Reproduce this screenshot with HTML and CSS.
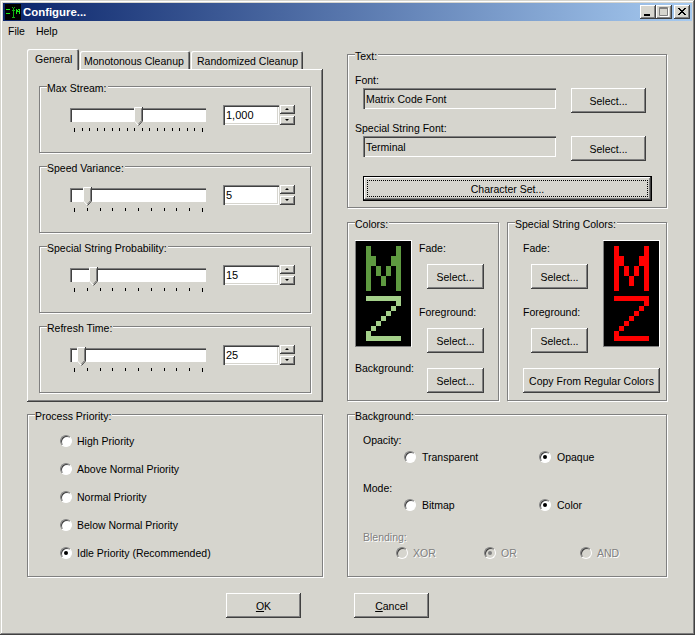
FILE: index.html
```html
<!DOCTYPE html>
<html lang="en">
<head>
  <meta charset="UTF-8" />
  <title>Configure...</title>
  <link rel="stylesheet" href="styles.css">
</head>
<body>
  <svg class="defs" width="0" height="0">
    <symbol id="thumb" viewBox="0 0 10 19">
      <path d="M0 0H9V14L5 19H4L0 14Z" fill="#d6d5ce"/>
      <path d="M0.5 14V0.5H8" fill="none" stroke="#fff"/>
      <path d="M0.5 14L4.5 18.5" fill="none" stroke="#fff"/>
      <path d="M8.5 0V14L4.5 18.5" fill="none" stroke="#404040"/>
      <path d="M7.5 1.5V13.6L4.5 17" fill="none" stroke="#808080"/>
    </symbol>
    <symbol id="letter-m" viewBox="0 0 35 45">
      <path d="M0 0H5V10H10V20H15V30H20V20H25V10H30V0H35V45H30V20H25V30H20V40H15V30H10V20H5V45H0Z" fill="currentColor"/>
    </symbol>
    <symbol id="letter-z" viewBox="0 0 35 45">
      <path d="M0 0H35V10H30V15H25V20H20V25H15V30H10V35H5V40H35V45H0V35H5V30H10V25H15V20H20V15H25V10H30V5H0Z" fill="currentColor"/>
    </symbol>
  </svg>

  <div class="window">
    <div class="titlebar">
      <svg class="app-icon" width="16" height="16" viewBox="0 0 16 16">
        <rect width="16" height="16" fill="#000"/>
        <path d="M1 5H5V6H4V7H3V8H2V9H5V10H1V9H2V8H3V7H4V6H1Z" fill="#19e619"/>
        <path d="M7 3H8V4H7ZM9 3H10V4H9ZM8 4H9V13H8ZM7 6H10V7H7ZM7 13H10V14H7Z" fill="#12b012"/>
        <path d="M11 5H12V6H13V7H14V6H13V5H15V10H14V8H12V10H11Z" fill="#19e619"/>
      </svg>
      <span class="title-text">Configure...</span>
      <div class="win-controls">
        <button class="win-btn" type="button">
          <svg width="16" height="14" viewBox="0 0 16 14"><rect x="4" y="9" width="6" height="2" fill="#000"/></svg>
        </button>
        <button class="win-btn" type="button">
          <svg width="16" height="14" viewBox="0 0 16 14"><path d="M3.5 2.5H11.5V10.5H3.5ZM3.5 3.5H11.5" fill="none" stroke="#808080"/><path d="M12.5 3V11.5H4" fill="none" stroke="#fff"/></svg>
        </button>
        <button class="win-btn win-close" type="button">
          <svg width="16" height="14" viewBox="0 0 16 14"><path d="M4 3L11 10M5 3L12 10M11 3L4 10M12 3L5 10" fill="none" stroke="#000"/></svg>
        </button>
      </div>
    </div>

    <div class="menubar">
      <span class="menu-item">File</span>
      <span class="menu-item">Help</span>
    </div>

    <div class="columns">
      <div class="col-left">
        <div class="tabs">
          <div class="tab tab-active">General</div>
          <div class="tab">Monotonous Cleanup</div>
          <div class="tab">Randomized Cleanup</div>
        </div>
        <div class="tab-panel">
          <div class="group slider-group">
            <div class="group-title">Max Stream:</div>
            <div class="slider-row">
              <div class="slider">
                <div class="track"></div>
                <svg class="thumb" style="left: 64px" width="10" height="19"><use href="#thumb"/></svg>
                <div class="ticks">
                  <i></i><i></i><i></i><i></i><i></i><i></i><i></i><i></i><i></i>
                  <i></i><i></i><i></i><i></i><i></i><i></i><i></i><i></i><i></i>
                </div>
              </div>
              <div class="edit">1,000</div>
              <div class="spin"><button class="spin-up" type="button"></button><button class="spin-down" type="button"></button></div>
            </div>
          </div>
          <div class="group slider-group">
            <div class="group-title">Speed Variance:</div>
            <div class="slider-row">
              <div class="slider">
                <div class="track"></div>
                <svg class="thumb" style="left: 13px" width="10" height="19"><use href="#thumb"/></svg>
                <div class="ticks"><i></i><i></i><i></i><i></i><i></i><i></i><i></i><i></i><i></i><i></i><i></i></div>
              </div>
              <div class="edit">5</div>
              <div class="spin"><button class="spin-up" type="button"></button><button class="spin-down" type="button"></button></div>
            </div>
          </div>
          <div class="group slider-group">
            <div class="group-title">Special String Probability:</div>
            <div class="slider-row">
              <div class="slider">
                <div class="track"></div>
                <svg class="thumb" style="left: 19px" width="10" height="19"><use href="#thumb"/></svg>
                <div class="ticks"><i></i><i></i><i></i><i></i><i></i><i></i><i></i><i></i><i></i><i></i><i></i></div>
              </div>
              <div class="edit">15</div>
              <div class="spin"><button class="spin-up" type="button"></button><button class="spin-down" type="button"></button></div>
            </div>
          </div>
          <div class="group slider-group">
            <div class="group-title">Refresh Time:</div>
            <div class="slider-row">
              <div class="slider">
                <div class="track"></div>
                <svg class="thumb" style="left: 7px" width="10" height="19"><use href="#thumb"/></svg>
                <div class="ticks"><i></i><i></i><i></i><i></i><i></i><i></i><i></i><i></i><i></i><i></i><i></i></div>
              </div>
              <div class="edit">25</div>
              <div class="spin"><button class="spin-up" type="button"></button><button class="spin-down" type="button"></button></div>
            </div>
          </div>
        </div>

        <div class="group priority-group">
          <div class="group-title">Process Priority:</div>
          <label class="radio-row"><input type="radio" name="priority"/>High Priority</label>
          <label class="radio-row"><input type="radio" name="priority"/>Above Normal Priority</label>
          <label class="radio-row"><input type="radio" name="priority"/>Normal Priority</label>
          <label class="radio-row"><input type="radio" name="priority"/>Below Normal Priority</label>
          <label class="radio-row"><input type="radio" name="priority" checked/>Idle Priority (Recommended)</label>
        </div>
      </div>

      <div class="col-right">
        <div class="group text-group">
          <div class="group-title">Text:</div>
          <div class="field-label">Font:</div>
          <div class="field-row">
            <div class="field">Matrix Code Font</div>
            <button class="btn btn-wide" type="button">Select...</button>
          </div>
          <div class="field-label field-label-2">Special String Font:</div>
          <div class="field-row">
            <div class="field">Terminal</div>
            <button class="btn btn-wide" type="button">Select...</button>
          </div>
          <button class="btn btn-default" type="button">Character Set...</button>
        </div>

        <div class="color-groups">
          <div class="group colors-group">
            <div class="group-title">Colors:</div>
            <div class="color-top">
              <div class="preview preview-green">
                <svg class="letter-fade" width="35" height="45"><use href="#letter-m"/></svg>
                <svg class="letter-fg" width="35" height="45"><use href="#letter-z"/></svg>
              </div>
              <div class="color-col">
                <div class="color-label">Fade:</div>
                <button class="btn btn-small" type="button">Select...</button>
                <div class="color-label color-label-2">Foreground:</div>
                <button class="btn btn-small" type="button">Select...</button>
              </div>
            </div>
            <div class="color-bottom">
              <div class="color-label bg-label">Background:</div>
              <button class="btn btn-small" type="button">Select...</button>
            </div>
          </div>

          <div class="group special-group">
            <div class="group-title">Special String Colors:</div>
            <div class="color-top">
              <div class="color-col">
                <div class="color-label">Fade:</div>
                <button class="btn btn-small" type="button">Select...</button>
                <div class="color-label color-label-2">Foreground:</div>
                <button class="btn btn-small" type="button">Select...</button>
              </div>
              <div class="preview preview-red">
                <svg width="35" height="45"><use href="#letter-m"/></svg>
                <svg width="35" height="45"><use href="#letter-z"/></svg>
              </div>
            </div>
            <button class="btn btn-copy" type="button">Copy From Regular Colors</button>
          </div>
        </div>

        <div class="group background-group">
          <div class="group-title">Background:</div>
          <div class="bg-label-row">Opacity:</div>
          <div class="bg-options">
            <label class="bg-option"><input type="radio" name="opacity"/>Transparent</label>
            <label class="bg-option"><input type="radio" name="opacity" checked/>Opaque</label>
          </div>
          <div class="bg-label-row bg-label-row-2">Mode:</div>
          <div class="bg-options">
            <label class="bg-option"><input type="radio" name="mode"/>Bitmap</label>
            <label class="bg-option"><input type="radio" name="mode" checked/>Color</label>
          </div>
          <div class="bg-label-row bg-label-row-3 disabled">Blending:</div>
          <div class="blend-options disabled">
            <label class="blend-option"><input type="radio" name="blend" disabled/>XOR</label>
            <label class="blend-option"><input type="radio" name="blend" checked disabled/>OR</label>
            <label class="blend-option"><input type="radio" name="blend" disabled/>AND</label>
          </div>
        </div>
      </div>
    </div>

    <div class="footer">
      <button class="btn btn-wide" type="button"><u>O</u>K</button>
      <button class="btn btn-wide" type="button"><u>C</u>ancel</button>
    </div>
  </div>
</body>
</html>
```

FILE: styles.css
```css
html, body {
  margin: 0;
  padding: 0;
  background-color: #d6d5ce;
  font-family: "Liberation Sans", Arial, sans-serif;
  font-size: 10.5px;
  line-height: 14px;
  color: #000;
}

.defs {
  display: block;
  height: 0;
}

.window {
  width: 695px;
  height: 635px;
  box-sizing: border-box;
  padding: 3px;
  overflow: hidden;
  background-color: #d6d5ce;
  box-shadow: inset -1px -1px 0 #404040, inset 1px 1px 0 #d6d5ce, inset -2px -2px 0 #808080, inset 2px 2px 0 #fff;
}

/* title bar */
.titlebar {
  display: flex;
  align-items: center;
  width: 689px;
  height: 18px;
  box-sizing: border-box;
  padding: 0 2px;
  background: linear-gradient(to right, #0a246a, #a6caf0);
}

.app-icon {
  flex: none;
}

.title-text {
  margin-left: 2px;
  font-size: 11.4px;
  font-weight: bold;
  color: #fff;
}

.win-controls {
  display: flex;
  margin-left: auto;
}

.win-btn {
  width: 16px;
  height: 14px;
  padding: 0;
  border: none;
  display: block;
  background-color: #d6d5ce;
  box-shadow: inset -1px -1px 0 #404040, inset 1px 1px 0 #fff, inset -2px -2px 0 #808080;
}

.win-btn svg {
  display: block;
}

.win-close {
  margin-left: 2px;
}

/* menu */
.menubar {
  display: flex;
  height: 19px;
  align-items: center;
  padding: 1px 0 0 5px;
  box-sizing: border-box;
}

.menu-item {
  margin-right: 11px;
}

/* layout */
.columns {
  display: flex;
  align-items: flex-start;
  padding: 9px 0 0 24px;
}

.col-left {
  width: 296px;
}

.col-right {
  width: 320px;
  margin-left: 24px;
  padding-top: 5px;
}

/* tabs */
.tabs {
  display: flex;
  align-items: flex-end;
  height: 20px;
  position: relative;
  z-index: 1;
}

.tab {
  height: 18px;
  box-sizing: border-box;
  margin-left: 1px;
  padding: 3px 0 0 4px;
  border-radius: 2px 2px 0 0;
  width: 110px;
  white-space: nowrap;
  box-shadow: inset 1px 1px 0 #fff, inset -1px 0 0 #404040, inset -2px 0 0 #808080;
}

.tab:last-child {
  width: 112px;
  padding-left: 6px;
}

.tab-active {
  width: 52px;
  height: 21px;
  margin: 0 0 -1px 0;
  padding: 3px 0 0 8px;
  background-color: #d6d5ce;
}

.tab-panel {
  width: 296px;
  height: 333px;
  box-sizing: border-box;
  padding: 17px 0 0 12px;
  box-shadow: inset -1px -1px 0 #404040, inset 1px 1px 0 #fff, inset -2px -2px 0 #808080;
}

/* group box */
.group {
  box-sizing: border-box;
  border: 1px solid #808080;
  box-shadow: inset 1px 1px 0 #fff, 1px 1px 0 #fff;
}

.group-title {
  width: fit-content;
  margin: -6px 0 0 7px;
  padding: 0 1px 0 0;
  height: 14px;
  background-color: #d6d5ce;
}

.slider-group {
  width: 272px;
  height: 67px;
  margin-bottom: 13px;
}

.slider-row {
  display: flex;
  align-items: flex-start;
  margin: 10px 0 0 30px;
}

/* slider */
.slider {
  position: relative;
  width: 136px;
  height: 28px;
  padding-top: 3px;
  box-sizing: content-box;
}

.track {
  height: 14px;
  background-color: #fff;
  box-shadow: inset 1px 1px 0 #808080, inset 2px 2px 0 #404040, inset -1px -1px 0 #fff;
}

.thumb {
  position: absolute;
  top: 2px;
}

.ticks {
  display: flex;
  justify-content: space-between;
  width: 129px;
  margin: 6px 0 0 4px;
}

.ticks i {
  display: block;
  width: 1px;
  height: 3px;
  background-color: #000;
}

.ticks i:first-child,
.ticks i:last-child {
  height: 4px;
}

/* edit and spinner */
.edit {
  width: 56px;
  height: 20px;
  box-sizing: border-box;
  margin-left: 17px;
  padding: 3px 0 0 3px;
  background-color: #fff;
  box-shadow: inset 1px 1px 0 #808080, inset 2px 2px 0 #404040, inset -1px -1px 0 #fff, inset -2px -2px 0 #d6d5ce;
  font-size: 11px;
}

.spin {
  display: flex;
  flex-direction: column;
  gap: 2px;
  margin-left: 1px;
}

.spin button {
  display: block;
  position: relative;
  width: 15px;
  height: 9px;
  padding: 0;
  border: none;
  background-color: #d6d5ce;
  box-shadow: inset -1px -1px 0 #404040, inset 1px 1px 0 #fff, inset -2px -2px 0 #808080;
}

.spin button::after {
  content: "";
  position: absolute;
  left: 5px;
  top: 3px;
  border-left: 2px solid transparent;
  border-right: 2px solid transparent;
}

.spin-up::after {
  border-bottom: 2px solid #000;
}

.spin-down::after {
  border-top: 2px solid #000;
}

/* radios */
input[type="radio"] {
  appearance: none;
  position: relative;
  flex: none;
  width: 12px;
  height: 12px;
  margin: 0;
  box-sizing: border-box;
  border: 1px solid;
  border-color: #808080 #fff #fff #808080;
  border-radius: 50%;
  background-color: #fff;
  box-shadow: inset 1px 1px 0 #404040;
}

input[type="radio"]:checked::after {
  content: "";
  position: absolute;
  left: 3px;
  top: 3px;
  width: 4px;
  height: 4px;
  border-radius: 50%;
  background-color: #000;
}

input[type="radio"]:disabled {
  background-color: #d6d5ce;
}

input[type="radio"]:disabled:checked::after {
  background-color: #808080;
}

.priority-group {
  width: 296px;
  height: 163px;
  margin-top: 12px;
}

.priority-group .group-title {
  margin-bottom: 11px;
}

.radio-row {
  display: flex;
  align-items: center;
  gap: 5px;
  height: 14px;
  margin: 0 0 14px 32px;
}

/* text group */
.text-group {
  width: 320px;
  height: 154px;
}

.field-label {
  margin: 10px 0 1px 7px;
}

.field-label-2 {
  margin-top: 8px;
}

.field-row {
  display: flex;
  align-items: flex-start;
  gap: 15px;
  margin-left: 15px;
}

.field {
  width: 193px;
  height: 21px;
  box-sizing: border-box;
  padding: 4px 0 0 3px;
  box-shadow: inset 1px 1px 0 #808080, inset 2px 2px 0 #404040, inset -1px -1px 0 #fff;
}

/* buttons */
.btn {
  display: block;
  height: 25px;
  padding: 0;
  border: none;
  background-color: #d6d5ce;
  font: inherit;
  color: #000;
  box-shadow: inset -1px -1px 0 #404040, inset 1px 1px 0 #fff, inset -2px -2px 0 #808080;
}

.btn-wide {
  width: 75px;
}

.btn-small {
  width: 57px;
}

.btn-default {
  width: 289px;
  margin: 15px 0 0 15px;
  border: 1px solid #000;
  outline: 1px dotted #000;
  outline-offset: -5px;
}

.btn-copy {
  width: 137px;
  margin: 15px 0 0 15px;
}

/* colour groups */
.color-groups {
  display: flex;
  gap: 8px;
  margin: 14px 0 13px;
}

.colors-group {
  width: 152px;
  height: 179px;
}

.special-group {
  width: 160px;
  height: 179px;
}

.color-top {
  display: flex;
  align-items: flex-start;
  margin: 9px 0 0 7px;
}

.special-group .color-top {
  margin-left: 15px;
}

.preview {
  flex: none;
  display: flex;
  flex-direction: column;
  align-items: center;
  gap: 5px;
  width: 57px;
  height: 107px;
  box-sizing: border-box;
  padding-top: 6px;
  background-color: #000;
  box-shadow: inset 0 1px 0 #fff, inset 1px 0 0 #808080, inset -1px 0 0 #fff, inset 0 -1px 0 #808080;
}

.preview svg {
  display: block;
}

.letter-fade {
  color: #5e9a40;
}

.letter-fg {
  color: #a4d08a;
}

.preview-red {
  color: #f00;
}

.color-col {
  flex: none;
  width: 73px;
  padding: 1px 0 0 7px;
}

.special-group .color-col {
  width: 80px;
  padding-left: 0;
}

.color-col .btn {
  margin: 9px 0 0 8px;
}

.color-label-2 {
  margin-top: 16px;
}

.color-bottom {
  display: flex;
  align-items: flex-start;
  justify-content: space-between;
  margin: 15px 14px 0 7px;
}

.bg-label {
  margin-top: -7px;
}

/* background group */
.background-group {
  width: 320px;
  height: 163px;
}

.bg-label-row {
  margin: 10px 0 0 15px;
}

.bg-label-row-2 {
  margin-top: 17px;
}

.bg-label-row-3 {
  margin-top: 18px;
}

.bg-options {
  display: flex;
  margin: 3px 0 0 56px;
}

.bg-option {
  display: flex;
  flex: none;
  align-items: center;
  gap: 6px;
  width: 135px;
}

.blend-options {
  display: flex;
  margin: 2px 0 0 48px;
}

.blend-option {
  display: flex;
  align-items: center;
  gap: 5px;
}

.blend-option:nth-child(1) {
  width: 88px;
}

.blend-option:nth-child(2) {
  width: 96px;
}

.disabled {
  color: #808080;
  text-shadow: 1px 1px 0 #fff;
}

/* bottom buttons */
.footer {
  display: flex;
  gap: 53px;
  margin: 16px 0 0 223px;
}
```
